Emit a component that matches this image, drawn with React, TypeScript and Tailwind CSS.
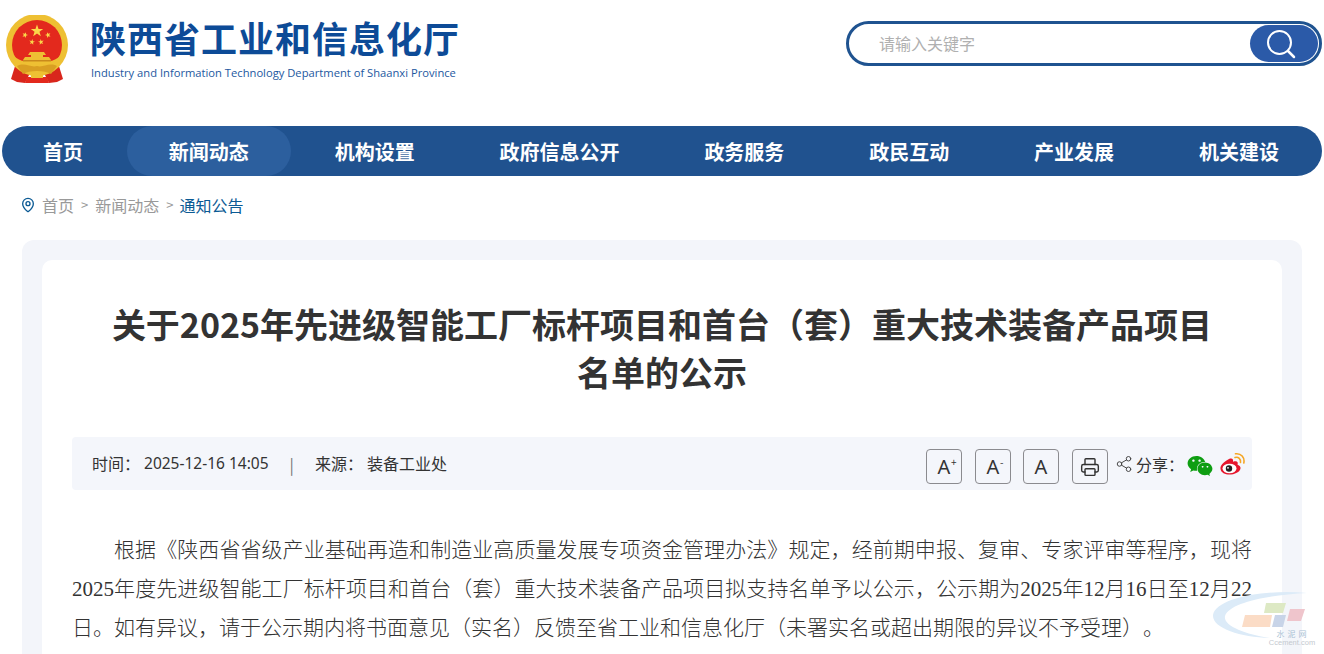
import React from 'react';
import { MapPin, Printer, Share2 } from 'lucide-react';
import { FaWeixin } from 'react-icons/fa';

const navItems = ['首页', '新闻动态', '机构设置', '政府信息公开', '政务服务', '政民互动', '产业发展', '机关建设'];

const Star = ({ x, y, r, rot = 0 }: { x: number; y: number; r: number; rot?: number }) => {
  const pts = Array.from({ length: 10 }, (_, i) => {
    const a = ((i * 36 - 90 + rot) * Math.PI) / 180;
    const rr = i % 2 === 0 ? r : r * 0.4;
    return `${(x + rr * Math.cos(a)).toFixed(2)},${(y + rr * Math.sin(a)).toFixed(2)}`;
  }).join(' ');
  return <polygon points={pts} fill="#fbd84a" />;
};

const Emblem = () => (
  <svg width="64" height="70" viewBox="0 0 64 70" className="shrink-0">
    {/* ribbons */}
    <path d="M11 48 L6 64 L12 67 L20 68 L24 60 L40 60 L44 68 L52 67 L58 64 L53 48 Z" fill="#d9261c" />
    <circle cx="32" cy="30" r="31" fill="#eec033" />
    <circle cx="32" cy="30" r="25" fill="#e3291d" />
    <path d="M8 40 C12 44 16 46 20 46 H44 C48 46 52 44 56 40 C52 52 44 60 32 60 C20 60 12 52 8 40 Z" fill="#eec033" />
    <Star x={32} y={16} r={6.5} />
    <Star x={20} y={20} r={3} rot={20} />
    <Star x={43} y={20} r={3} rot={-20} />
    <Star x={27} y={27} r={3} rot={10} />
    <Star x={36} y={27} r={3} rot={-10} />
    {/* tower */}
    <path d="M25 37 H39 L41 40 H38 V42 H44 L46 45 H18 L20 42 H26 V40 H23 Z" fill="#eec033" />
    <rect x="18" y="45" width="28" height="1.500" fill="#c98a1c" />
    <path d="M12 51 C20 47 26 53 32 51 C38 53 44 47 52 51 L46 59 C40 55 24 55 18 59 Z" fill="#d99f22" />
    <path d="M22 62 H42 L44 68 H20 Z" fill="#e3291d" />
    <rect x="26" y="58" width="12" height="5" fill="#eec033" />
  </svg>
);

const Weibo = () => (
  <svg width="26" height="24" viewBox="0 0 26 24">
    <path d="M10 7 C4 10 1 14 1.500 17 C2 21 7 23 12 22.500 C18 22 22 18.500 21.500 15.500 C21 13.500 19 13 18.500 12.500 C19.500 10 18 8.500 14 9.800 C14.500 7 13 5.800 10 7 Z" fill="#e6162d" />
    <ellipse cx="10.500" cy="16.500" rx="7" ry="4.800" fill="#fff" />
    <circle cx="10" cy="16.500" r="3.200" fill="#222" />
    <circle cx="9" cy="15.800" r="0.900" fill="#fff" />
    <path d="M16 5.500 C19.500 4.500 22 7 21.500 10.500" fill="none" stroke="#f5a623" strokeWidth="1.600" strokeLinecap="round" />
    <path d="M16.500 1.800 C22 1 26 5.500 24.800 11" fill="none" stroke="#f5a623" strokeWidth="1.600" strokeLinecap="round" />
  </svg>
);

const Wechat = () => (
  <div className="relative h-[22px] w-[26px]">
    <FaWeixin className="absolute left-0 top-0 text-[#0e9e12]" size={26} />
  </div>
);

const Watermark = () => (
  <svg width="110" height="60" viewBox="0 0 110 60" className="pointer-events-none absolute bottom-[4px] right-[4px]">
    <path d="M97 3 C55 -1 6 8 3 25 C2 38 30 47 60 48 C35 44 13 36 15 26 C20 12 60 5 97 3 Z" fill="#dcebf8" />
    <polygon points="35,25 62,25 60,37 32,37" fill="#fbdcc6" />
    <polygon points="65,25 76,25 73,37 62,37" fill="#c8d4e8" />
    <polygon points="56,13 76,13 73,23 54,23" fill="#dde9c4" />
    <polygon points="80,19 95,19 91,31 77,31" fill="#efc5cc" />
    <text x="83" y="47" textAnchor="middle" fontSize="8" fill="#a9bfd4" letterSpacing="3" fontFamily="'Noto Sans CJK SC', sans-serif">水泥网</text>
    <text x="82" y="55" textAnchor="middle" fontSize="7.500" fill="#c4c9cf" fontFamily="'Liberation Sans', sans-serif">Ccement.com</text>
  </svg>
);

const SizeButton = ({ sup }: { sup?: string }) => (
  <button className="relative mt-[6px] flex h-[35px] w-[36px] items-center justify-center rounded-[4px] border border-[#8b8b8f] text-[20px] leading-none text-[#333]">
    <span className="font-['Noto_Sans','Noto_Sans_CJK_SC',sans-serif]">A</span>
    {sup && <span className="absolute left-[24px] top-[7px] text-[10px] leading-none">{sup}</span>}
  </button>
);

export default function App() {
  return (
    <div className="relative h-[654px] w-[1324px] overflow-hidden bg-white font-['Noto_Sans_CJK_SC',sans-serif]">
      {/* Header */}
      <header className="flex h-[126px] items-start justify-between pl-[5px] pr-[2px]">
        <div className="mt-[15px] flex items-start">
          <Emblem />
          <div className="ml-[21px]">
            <h1 className="text-[36px] font-bold leading-[44px] tracking-[1px] text-[#0d4b97]">陕西省工业和信息化厅</h1>
            <p className="ml-[1px] mt-[6px] font-['Open_Sans',sans-serif] text-[11.200px] leading-[16px] text-[#1d58a0]">
              Industry and Information Technology Department of Shaanxi Province
            </p>
          </div>
        </div>
        <div className="mt-[21px] flex h-[45px] w-[476px] items-center justify-between rounded-full border-[3px] border-[#1f5390] pl-[30px] pr-[1px]">
          <span className="-mt-[2px] text-[16px] text-[#b0b0b0]">请输入关键字</span>
          <div className="flex h-[37px] w-[68px] items-center justify-center rounded-full bg-[#2b5aa8] pr-[6px]">
            <svg width="32" height="32" viewBox="0 0 32 32" fill="none" stroke="#fff" strokeWidth="2" strokeLinecap="round">
              <circle cx="14.500" cy="14.500" r="11.500" />
              <path d="M23 23 L29 29" strokeWidth="2.500" />
            </svg>
          </div>
        </div>
      </header>

      {/* Nav */}
      <nav className="mx-[2px] flex h-[50px] w-[1320px] justify-between rounded-full bg-[#20528f] pr-[2px]">
        {navItems.map((item) => (
          <a
            key={item}
            className={`flex h-full items-center rounded-full px-[41px] pt-[1px] text-[20px] font-bold text-white ${
              item === '新闻动态' ? 'bg-[#2c5f9e] px-[42px]' : ''
            }`}
          >
            {item}
          </a>
        ))}
      </nav>

      {/* Breadcrumb */}
      <div className="ml-[20px] flex h-[64px] items-center pb-[6px] text-[16px] text-[#999]">
        <MapPin size={16} strokeWidth={2} className="mr-[6px] text-[#0b5a94]" />
        <span>首页</span>
        <span className="mx-[7px] text-[13px]">&gt;</span>
        <span>新闻动态</span>
        <span className="ml-[7px] mr-[6px] text-[13px]">&gt;</span>
        <span className="text-[#0b5a94]">通知公告</span>
      </div>

      {/* Article */}
      <main className="mx-[22px] h-[500px] w-[1280px] rounded-[12px] bg-[#f3f5fa] p-[20px]">
        <div className="h-full rounded-[10px] bg-white px-[30px] pt-[40px]">
          <h2 className="text-center text-[34px] font-bold leading-[48px] text-[#333]">
            关于2025年先进级智能工厂标杆项目和首台（套）重大技术装备产品项目
            <br />
            名单的公示
          </h2>
          <div className="mt-[41px] flex h-[53px] items-center justify-between rounded-[4px] bg-[#f4f6fb] pl-[20px] pr-[7px] text-[16px] text-[#333]">
            <div className="flex items-center">
              <span className="-mt-[1px]">时间：</span>
              <span className="ml-[4px] mt-[1px] font-['Noto_Sans',sans-serif] text-[15.500px]">2025-12-16 14:05</span>
              <span className="mx-[21px] text-[#777]">|</span>
              <span className="-mt-[1px]">来源：</span>
              <span className="-mt-[1px] ml-[4px]">装备工业处</span>
            </div>
            <div className="flex items-center">
              <SizeButton sup="+" />
              <div className="ml-[13px]"><SizeButton sup="-" /></div>
              <div className="ml-[12px]"><SizeButton /></div>
              <button className="ml-[13px] mt-[6px] flex h-[35px] w-[36px] items-center justify-center rounded-[4px] border border-[#8b8b8f] text-[#333]">
                <Printer size={20} strokeWidth={1.700} />
              </button>
              <Share2 size={18} strokeWidth={1.300} className="ml-[7px] text-[#444]" />
              <span className="ml-[3px]">分享：</span>
              <div className="ml-[3px]"><Wechat /></div>
              <div className="ml-[6px]"><Weibo /></div>
            </div>
          </div>
          <p className="mt-[41px] text-justify indent-[42px] font-['Liberation_Serif','Noto_Sans_CJK_SC',serif] text-[21px] font-light leading-[38.800px] text-[#333] [text-spacing-trim:space-all]">
            根据《陕西省省级产业基础再造和制造业高质量发展专项资金管理办法》规定，经前期申报、复审、专家评审等程序，现将2025年度先进级智能工厂标杆项目和首台（套）重大技术装备产品项目拟支持名单予以公示，公示期为2025年12月16日至12月22日。如有异议，请于公示期内将书面意见（实名）反馈至省工业和信息化厅（未署实名或超出期限的异议不予受理）。
          </p>
        </div>
      </main>

      <Watermark />
    </div>
  );
}
